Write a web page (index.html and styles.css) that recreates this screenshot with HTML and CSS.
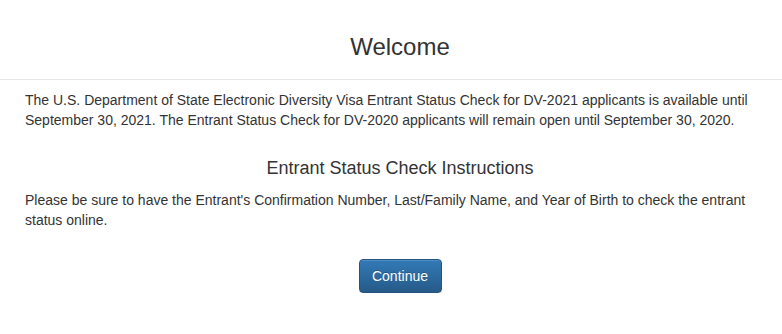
FILE: index.html
```html
<!DOCTYPE html>
<html lang="en">
<head>
    <meta charset="UTF-8">
    <title>Entrant Status Check</title>
    <link rel="stylesheet" href="styles.css">
</head>
<body>
<div class="page">
    <div class="page-header">
        <h1 class="title">Welcome</h1>
    </div>
    <div class="page-body">
        <p class="lead-text">The U.S. Department of State Electronic Diversity Visa Entrant Status Check for DV-2021 applicants is available until September 30, 2021. The Entrant Status Check for DV-2020 applicants will remain open until September 30, 2020.</p>
        <h2 class="subtitle">Entrant Status Check Instructions</h2>
        <p class="lead-text">Please be sure to have the Entrant's Confirmation Number, Last/Family Name, and Year of Birth to check the entrant status online.</p>
        <div class="actions">
            <button type="button" class="btn-primary">Continue</button>
        </div>
    </div>
</div>
</body>
</html>
```

FILE: styles.css
```css
* {
    margin: 0;
    padding: 0;
    box-sizing: border-box;
}

body {
    font-family: "Liberation Sans", Arial, sans-serif;
    font-size: 14px;
    line-height: 20px;
    color: #333;
    background: #fff;
}

.page-header {
    padding: 34px 7px 19px 25px;
    border-bottom: 1px solid #e5e5e5;
}
.title {
    font-size: 24px;
    line-height: 26px;
    font-weight: normal;
    text-align: center;
}

.page-body {
    padding: 10px 7px 0 25px;
}
.lead-text {
    margin: 0;
}
.subtitle {
    margin: 28px 0 12px;
    font-size: 18px;
    line-height: 20px;
    font-weight: normal;
    text-align: center;
}

.actions {
    margin-top: 29px;
    text-align: center;
}
.btn-primary {
    width: 83px;
    height: 34px;
    padding: 6px 12px;
    font-family: inherit;
    font-size: 14px;
    line-height: 20px;
    color: #fff;
    background-image: linear-gradient(to bottom, #337ab7 0, #265a88 100%);
    border: 1px solid #245580;
    border-radius: 4px;
    text-shadow: 0 -1px 0 rgba(0, 0, 0, .2);
    box-shadow: inset 0 1px 0 rgba(255, 255, 255, .15), 0 1px 1px rgba(0, 0, 0, .075);
    cursor: pointer;
}
```
